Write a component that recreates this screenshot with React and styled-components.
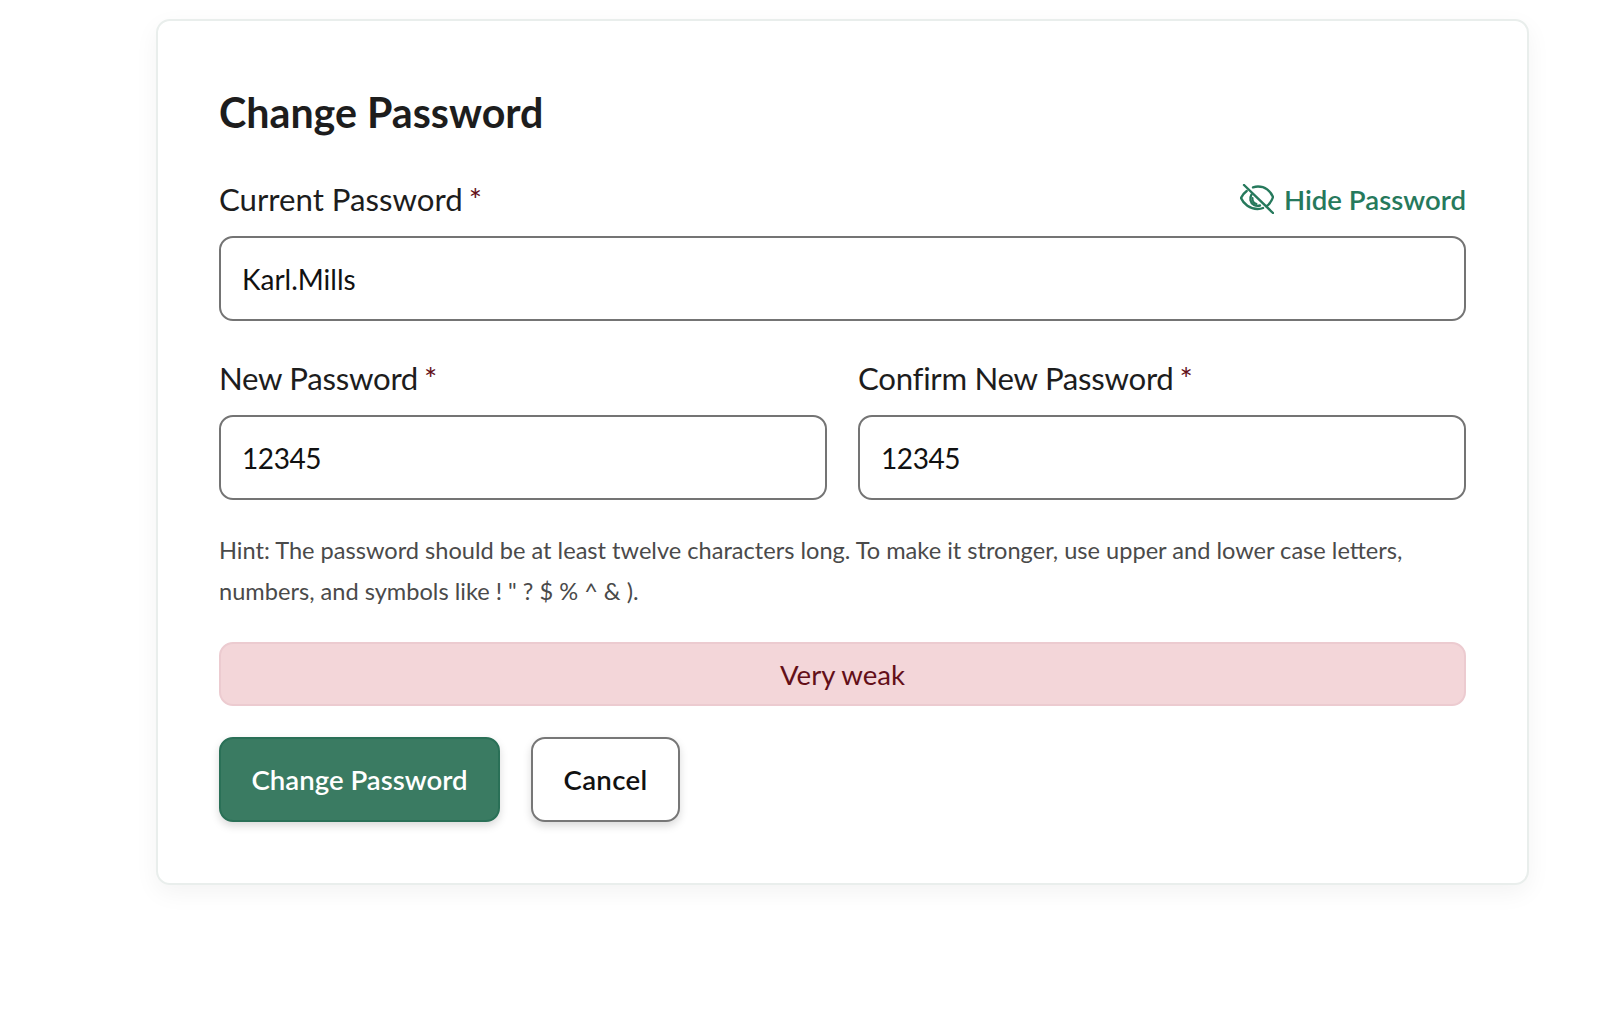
import React from 'react';
import styled, { createGlobalStyle } from 'styled-components';

const GlobalStyle = createGlobalStyle`
    html, body {
        margin: 0;
        padding: 0;
        background: #fff;
    }
    body {
        font-family: Lato, "Liberation Sans", sans-serif;
        color: #111;
    }
`;

const Page = styled.div`
    width: 1600px;
    height: 1020px;
    padding: 19px 71px 0 156px;
    box-sizing: border-box;
    overflow: hidden;
`;

const Card = styled.form`
    box-sizing: border-box;
    height: 866px;
    padding: 63px 61px 0;
    background: #fff;
    border: 2px solid #e9eeec;
    border-radius: 14px;
    box-shadow: 0 8px 24px rgba(0, 0, 0, .05);
`;

const Title = styled.h1`
    margin: 0 0 39px;
    font-size: 41.2px;
    line-height: 56px;
    font-weight: 700;
    color: #1d1d1d;
`;

const LabelRow = styled.div`
    display: flex;
    align-items: center;
    justify-content: space-between;
    height: 40px;
    margin-bottom: 17px;
`;

const Label = styled.label`
    font-size: 31.2px;
    color: #1d1d1d;
    letter-spacing: ${props => props.$tight ? '-.28px' : 'normal'};
`;

const Star = styled.span`
    margin-left: 6px;
    color: #630f18;
`;

const Toggle = styled.button`
    display: flex;
    align-items: center;
    gap: 10px;
    padding: 0;
    border: 0;
    background: none;
    font: 600 27.6px Lato, sans-serif;
    color: #26795c;
`;

const Input = styled.input`
    display: block;
    box-sizing: border-box;
    width: 100%;
    height: 85px;
    padding: 0 21px;
    border: 2px solid #747474;
    border-radius: 14px;
    background: #fff;
    font: 400 28px Lato, sans-serif;
    letter-spacing: ${props => props.$digits ? '-.4px' : 'normal'};
    color: #111;
    outline: none;
`;

const Columns = styled.div`
    display: grid;
    grid-template-columns: 1fr 1fr;
    gap: 31px;
    margin-top: 37px;
`;

const Hint = styled.p`
    margin: 30px 0 0;
    font-size: 23.6px;
    line-height: 41px;
    color: #4a4a4a;
`;

const Strength = styled.div`
    display: flex;
    align-items: center;
    justify-content: center;
    box-sizing: border-box;
    height: 64px;
    margin-top: 30px;
    background: #f3d6d9;
    border: 2px solid #eccbd0;
    border-radius: 14px;
    font-size: 27.6px;
    color: #630f18;
`;

const Actions = styled.div`
    display: flex;
    gap: 31px;
    margin-top: 31px;
`;

const Button = styled.button`
    box-sizing: border-box;
    height: 85px;
    padding: 0 30.5px;
    border: 2px solid ${props => props.$primary ? '#2a7057' : '#777'};
    border-radius: 14px;
    background: ${props => props.$primary ? '#3a7b62' : '#fff'};
    font: 600 27.6px Lato, sans-serif;
    letter-spacing: ${props => props.$primary ? 'normal' : '.3px'};
    color: ${props => props.$primary ? '#fff' : '#111'};
    box-shadow: 0 4px 8px rgba(0, 0, 0, .15);
`;

const EyeOff = () => (
    <svg width="34" height="30" viewBox="0 0 34 30" fill="none" stroke="currentColor" strokeWidth="2.4" strokeLinecap="round" strokeLinejoin="round">
        <path d="M13 3.3C15 2.7 16.5 2.5 18 2.5c7 0 12.5 4.5 15 10.5-1 3.5-3.5 7-6.5 9.3" />
        <path d="M6.7 7C4 9 2 11.5 1 14c2.5 6 9 11 16.5 11 2 0 4-.3 5.5-1" />
        <path d="M11.5 10.5C9.5 14 10 19 14 21c2 1 4 1.2 6 .5" />
        <path d="M12.5 14c-.2 2.6 1 5 4 6" strokeWidth="2" />
        <path d="M4 1l29 28" />
    </svg>
);

const Field = ({ label, value }) => (
    <div>
        <LabelRow>
            <Label $tight>{label}<Star>*</Star></Label>
        </LabelRow>
        <Input $digits defaultValue={value} />
    </div>
);

export default function App() {
    return (
        <Page>
            <GlobalStyle />
            <Card>
                <Title>Change Password</Title>
                <LabelRow>
                    <Label>Current Password<Star>*</Star></Label>
                    <Toggle type="button"><EyeOff />Hide Password</Toggle>
                </LabelRow>
                <Input defaultValue="Karl.Mills" />
                <Columns>
                    <Field label="New Password" value="12345" />
                    <Field label="Confirm New Password" value="12345" />
                </Columns>
                <Hint>
                    Hint: The password should be at least twelve characters long. To make it stronger, use upper and lower case letters, numbers, and symbols like ! " ? $ % ^ &amp; ).
                </Hint>
                <Strength>Very weak</Strength>
                <Actions>
                    <Button type="button" $primary>Change Password</Button>
                    <Button type="button">Cancel</Button>
                </Actions>
            </Card>
        </Page>
    );
}
